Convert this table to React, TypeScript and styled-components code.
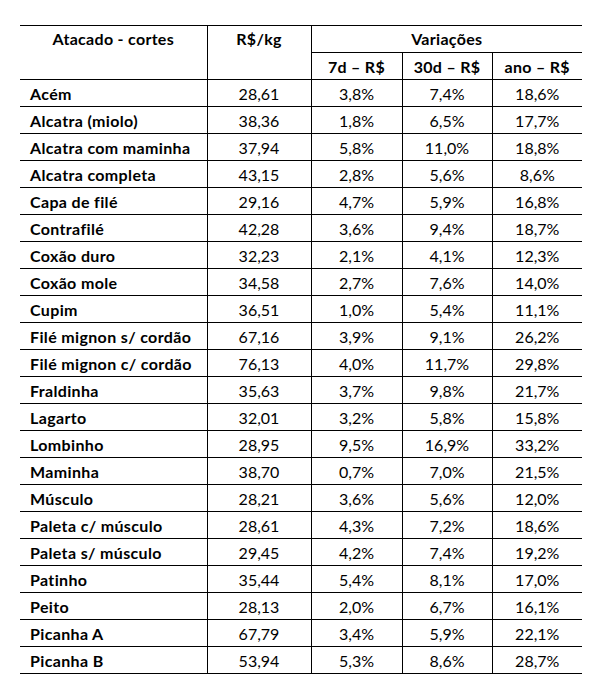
import React from "react";
import styled, { createGlobalStyle } from "styled-components";

const rows: [string, string, string, string, string][] = [
  ["Acém", "28,61", "3,8%", "7,4%", "18,6%"],
  ["Alcatra (miolo)", "38,36", "1,8%", "6,5%", "17,7%"],
  ["Alcatra com maminha", "37,94", "5,8%", "11,0%", "18,8%"],
  ["Alcatra completa", "43,15", "2,8%", "5,6%", "8,6%"],
  ["Capa de filé", "29,16", "4,7%", "5,9%", "16,8%"],
  ["Contrafilé", "42,28", "3,6%", "9,4%", "18,7%"],
  ["Coxão duro", "32,23", "2,1%", "4,1%", "12,3%"],
  ["Coxão mole", "34,58", "2,7%", "7,6%", "14,0%"],
  ["Cupim", "36,51", "1,0%", "5,4%", "11,1%"],
  ["Filé mignon s/ cordão", "67,16", "3,9%", "9,1%", "26,2%"],
  ["Filé mignon c/ cordão", "76,13", "4,0%", "11,7%", "29,8%"],
  ["Fraldinha", "35,63", "3,7%", "9,8%", "21,7%"],
  ["Lagarto", "32,01", "3,2%", "5,8%", "15,8%"],
  ["Lombinho", "28,95", "9,5%", "16,9%", "33,2%"],
  ["Maminha", "38,70", "0,7%", "7,0%", "21,5%"],
  ["Músculo", "28,21", "3,6%", "5,6%", "12,0%"],
  ["Paleta c/ músculo", "28,61", "4,3%", "7,2%", "18,6%"],
  ["Paleta s/ músculo", "29,45", "4,2%", "7,4%", "19,2%"],
  ["Patinho", "35,44", "5,4%", "8,1%", "17,0%"],
  ["Peito", "28,13", "2,0%", "6,7%", "16,1%"],
  ["Picanha A", "67,79", "3,4%", "5,9%", "22,1%"],
  ["Picanha B", "53,94", "5,3%", "8,6%", "28,7%"],
];

const GlobalStyle = createGlobalStyle`
  body {
    margin: 0;
    background: #ffffff;
    font-family: Lato, "Liberation Sans", sans-serif;
    color: #000000;
  }
`;

const Page = styled.div`
  padding: 25px 19px 20px 20px;
`;

const Table = styled.table`
  width: 562px;
  border-collapse: collapse;
  table-layout: fixed;
  font-size: 16px;
  line-height: 19px;
`;

const Head = styled.th<{ $first?: boolean }>`
  font-weight: 700;
  text-align: center;
  vertical-align: top;
  padding: 3px 0 0;
  height: 27px;
  box-sizing: border-box;
  letter-spacing: 0.3px;
  border-top: 1px solid #000;
  border-bottom: 1px solid #000;
  border-left: ${(p) => (p.$first ? "none" : "1px solid #000")};
`;

const SubHead = styled.th`
  font-weight: 700;
  text-align: center;
  vertical-align: middle;
  height: 27px;
  box-sizing: border-box;
  padding: 0;
  letter-spacing: 0.3px;
  border: 1px solid #000;
  &:last-child {
    border-right: none;
  }
`;

const Row = styled.tr`
  height: 27px;
`;

const Name = styled.td`
  font-weight: 700;
  text-align: left;
  letter-spacing: 0.35px;
  padding: 0 0 0 10px;
  border-bottom: 1px solid #000;
  border-right: 1px solid #000;
`;

const Value = styled.td`
  text-align: center;
  padding: 0;
  border: 1px solid #000;
  border-top: none;
  &:last-child {
    border-right: none;
  }
`;

export default function App() {
  return (
    <Page>
      <GlobalStyle />
      <Table>
        <colgroup>
          <col style={{ width: 187 }} />
          <col style={{ width: 104 }} />
          <col style={{ width: 91 }} />
          <col style={{ width: 90 }} />
          <col style={{ width: 90 }} />
        </colgroup>
        <thead>
          <tr>
            <Head $first rowSpan={2}>
              Atacado - cortes
            </Head>
            <Head rowSpan={2}>R$/kg</Head>
            <Head colSpan={3}>Variações</Head>
          </tr>
          <tr>
            <SubHead>7d – R$</SubHead>
            <SubHead>30d – R$</SubHead>
            <SubHead>ano – R$</SubHead>
          </tr>
        </thead>
        <tbody>
          {rows.map(([name, price, d7, d30, year]) => (
            <Row key={name}>
              <Name>{name}</Name>
              <Value>{price}</Value>
              <Value>{d7}</Value>
              <Value>{d30}</Value>
              <Value>{year}</Value>
            </Row>
          ))}
        </tbody>
      </Table>
    </Page>
  );
}
